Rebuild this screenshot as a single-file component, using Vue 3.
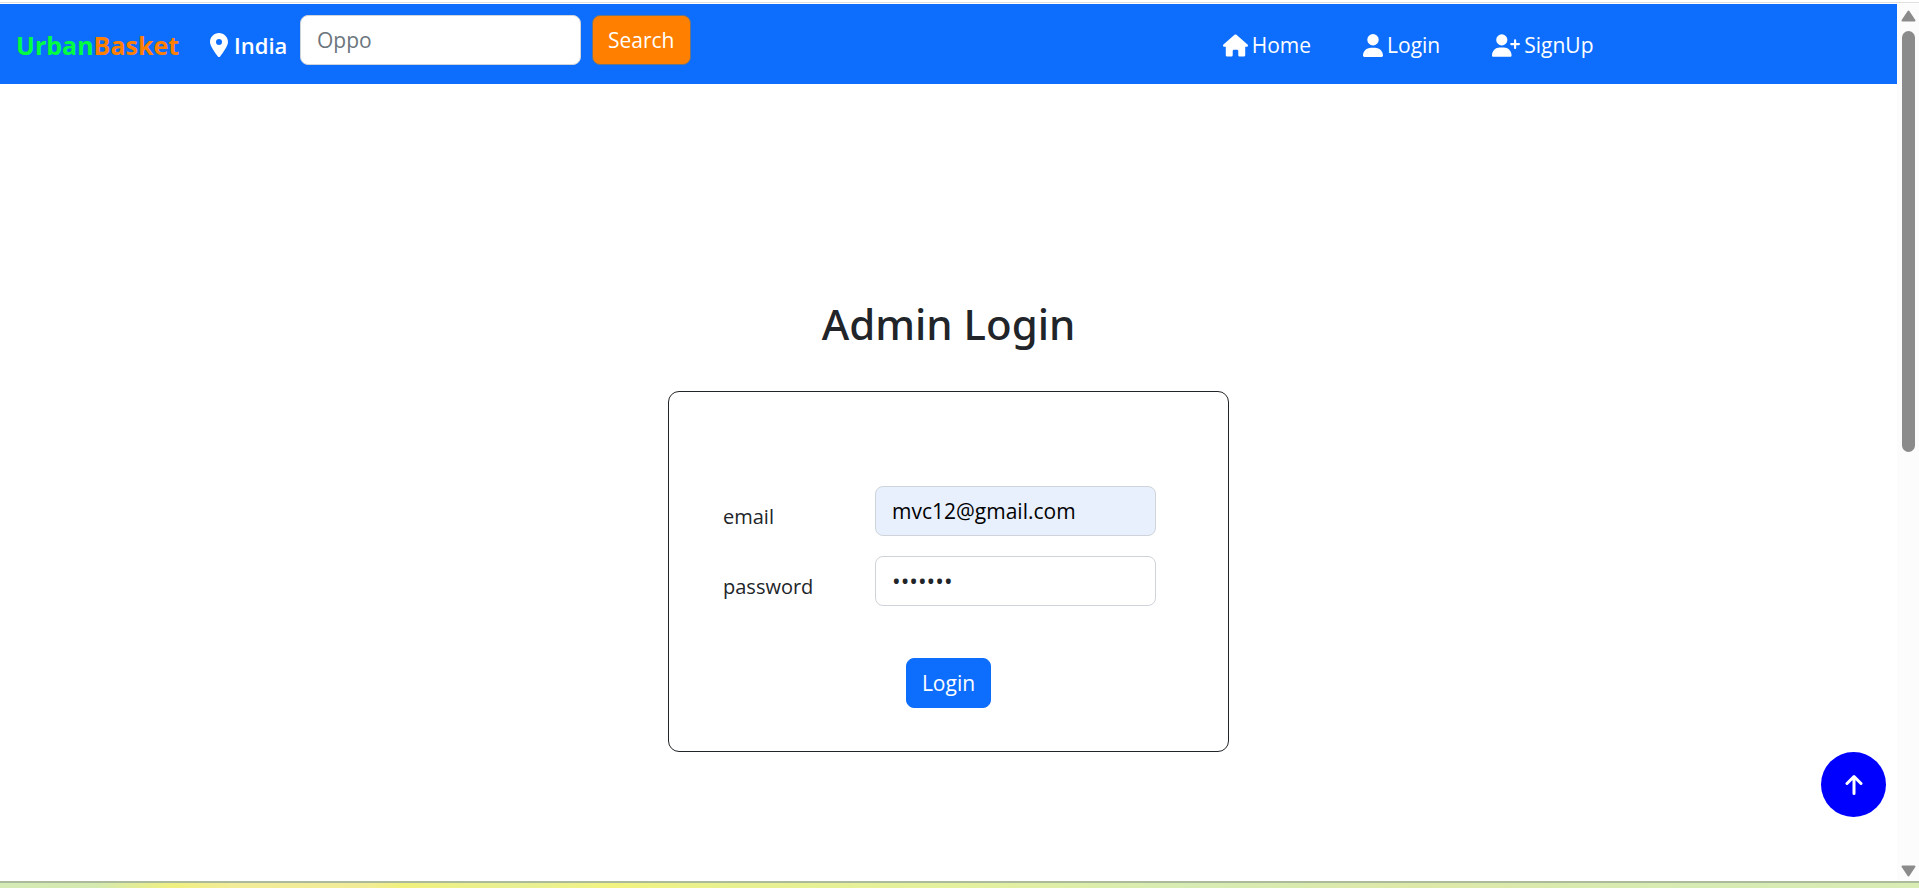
<script setup>
import { ref } from 'vue'

const search = ref('')
const email = ref('mvc12@gmail.com')
const password = ref('mvc1234')
</script>

<template>
  <div class="window">
    <div class="top-edge"></div>
    <div class="viewport">
      <div class="page">
        <header class="navbar">
          <a class="brand" href="#"><span class="brand-a">Urban</span><span class="brand-b">Basket</span></a>
          <div class="location">
            <svg class="pin" viewBox="0 0 384 512" aria-hidden="true"><path d="M215.700 499.200C267 435 384 279.400 384 192C384 86 298 0 192 0S0 86 0 192c0 87.400 117 243 168.300 307.200c12.300 15.300 35.100 15.300 47.400 0zM192 128a64 64 0 1 1 0 128 64 64 0 1 1 0-128z" /></svg>
            <span>India</span>
          </div>
          <form class="search" @submit.prevent>
            <input v-model="search" class="field" type="search" placeholder="Oppo" aria-label="Search products" />
            <button class="btn btn-search" type="submit">Search</button>
          </form>
          <nav class="links">
            <a href="#">
              <svg class="i-home" viewBox="0 0 576 512" aria-hidden="true"><path d="M575.800 255.500c0 18-15 32.100-32 32.100h-32l.7 160.200c0 2.700-.2 5.400-.5 8.100V472c0 22.100-17.900 40-40 40H392c-22.100 0-40-17.900-40-40v-88c0-17.700-14.300-32-32-32h-64c-17.700 0-32 14.300-32 32v88c0 22.100-17.900 40-40 40h-80c-22.100 0-40-17.900-40-40V287.600H32c-18 0-32-14-32-32.100 0-9 3-17 10-24L266.400 8c7-7 15-8 22-8s15 2 21 7l255.400 224.500c8 7 12 15 11 24z" /></svg>
              <span>Home</span>
            </a>
            <a href="#">
              <svg class="i-user" viewBox="0 0 448 512" aria-hidden="true"><path d="M224 256a128 128 0 1 0 0-256 128 128 0 1 0 0 256zm-45.700 48C79.800 304 0 383.800 0 482.300 0 498.700 13.300 512 29.700 512h388.600c16.400 0 29.700-13.300 29.700-29.700 0-98.500-79.800-178.300-178.300-178.300z" /></svg>
              <span>Login</span>
            </a>
            <a href="#">
              <svg class="i-plus" viewBox="0 0 640 512" aria-hidden="true"><path d="M96 128a128 128 0 1 1 256 0 128 128 0 1 1-256 0zM0 482.300C0 383.800 79.800 304 178.300 304h91.400c98.500 0 178.300 79.800 178.300 178.300 0 16.400-13.300 29.700-29.700 29.700H29.700C13.300 512 0 498.700 0 482.300zM504 312v-64h-64c-13.300 0-24-10.700-24-24s10.700-24 24-24h64v-64c0-13.300 10.700-24 24-24s24 10.700 24 24v64h64c13.300 0 24 10.700 24 24s-10.700 24-24 24h-64v64c0 13.300-10.700 24-24 24s-24-10.700-24-24z" /></svg>
              <span>SignUp</span>
            </a>
          </nav>
        </header>

        <main class="content">
          <h1>Admin Login</h1>
          <form class="card" @submit.prevent>
            <div class="row">
              <label for="email">email</label>
              <input id="email" v-model="email" class="field filled" type="email" />
            </div>
            <div class="row">
              <label for="password">password</label>
              <input id="password" v-model="password" class="field masked" type="password" />
            </div>
            <button class="btn btn-login" type="submit">Login</button>
          </form>
        </main>

        <button class="to-top" type="button" aria-label="Back to top">
          <svg viewBox="0 0 18 22" aria-hidden="true"><path d="M9 19.500V3M2 9.500L9 2.500l7 7" /></svg>
        </button>
      </div>

      <div class="scrollbar" aria-hidden="true">
        <svg class="arrow" viewBox="0 0 15 12"><path d="M7.500 1.500L13.500 10.500h-12z" /></svg>
        <div class="track"><div class="thumb"></div></div>
        <svg class="arrow" viewBox="0 0 15 12"><path d="M7.500 10.500L13.500 1.500h-12z" /></svg>
      </div>
    </div>
    <div class="bottom-edge"></div>
  </div>
</template>

<style>
body {
  margin: 0;
  background: #fff;
}
</style>

<style scoped>
* {
  box-sizing: border-box;
}

.window {
  display: flex;
  flex-direction: column;
  min-height: 100vh;
  font-family: "Open Sans", "Noto Sans", sans-serif;
  font-size: 21px;
  line-height: 32px;
  color: #212529;
}

.top-edge {
  height: 4px;
  background: linear-gradient(#fff 2px, #dfdfdf 2px, #dfdfdf 3px, #fff 3px);
}

.viewport {
  display: flex;
  flex: 1;
}

.page {
  position: relative;
  flex: 1;
}

.navbar {
  display: flex;
  align-items: center;
  height: 80px;
  padding: 2px 16% 0 16px;
  background: #0d6efd;
  color: #fff;
}

.brand {
  width: 194px;
  font-size: 25px;
  font-weight: 700;
  text-decoration: none;
}

.brand-a {
  color: #00ff40;
}

.brand-b {
  color: #ff8000;
}

.location {
  display: flex;
  align-items: center;
  gap: 6px;
  width: 90px;
  font-size: 22px;
  font-weight: 600;
}

svg {
  flex: none;
  fill: currentColor;
}

.pin {
  width: 18px;
  height: 24px;
}

.search {
  display: flex;
  gap: 11px;
  margin-bottom: 10px;
}

.field {
  width: 281px;
  height: 50px;
  padding: 0 16px;
  border: 1px solid #ced4da;
  border-radius: 8px;
  background: #fff;
  color: #212529;
  font: inherit;
  outline: none;
}

.field::placeholder {
  color: #6c757d;
  opacity: 1;
}

.filled {
  background: #e8f0fe;
  color: #000;
}

.masked {
  font-size: 23px;
}

.btn {
  height: 50px;
  padding: 0 15px;
  border: 1px solid #0d6efd;
  border-radius: 8px;
  background: #0d6efd;
  color: #fff;
  font: inherit;
}

.btn-search {
  border-color: #6c757d;
  background: #ff8000;
}

.links {
  display: flex;
  gap: 52px;
  margin-left: auto;
}

.links a {
  display: flex;
  align-items: center;
  gap: 4px;
  color: #fff;
  text-decoration: none;
}

.i-home {
  width: 25px;
  height: 23px;
}

.i-user {
  width: 20px;
  height: 23px;
}

.i-plus {
  width: 28px;
  height: 23px;
}

.content {
  display: flex;
  flex-direction: column;
  align-items: center;
  padding-top: 210px;
}

h1 {
  margin: 0 0 37px;
  font-family: "Noto Sans", "Open Sans", sans-serif;
  font-size: 42px;
  font-weight: 500;
  line-height: 60px;
}

.card {
  display: flex;
  flex-direction: column;
  width: 561px;
  padding: 94px 72px 43px 54px;
  border: 1px solid #212529;
  border-radius: 11px;
}

.row {
  display: flex;
  align-items: center;
  justify-content: space-between;
  margin-bottom: 20px;
}

.row label {
  padding-top: 12px;
  font-size: 20px;
}

.btn-login {
  align-self: center;
  margin: 32px 0 0 18px;
}

.to-top {
  position: absolute;
  right: 11px;
  bottom: 64px;
  display: flex;
  align-items: center;
  justify-content: center;
  width: 65px;
  height: 65px;
  padding: 0;
  border: 0;
  border-radius: 50%;
  background: #00f;
  color: #fff;
}

.to-top svg {
  width: 18px;
  height: 22px;
  fill: none;
  stroke: currentColor;
  stroke-width: 3;
  stroke-linecap: round;
  stroke-linejoin: round;
}

.scrollbar {
  display: flex;
  flex-direction: column;
  align-items: center;
  gap: 9px;
  width: 22px;
  padding: 6px 0 4px;
  background: #fcfcfc;
}

.arrow {
  width: 15px;
  height: 12px;
  fill: #8b8b8b;
  stroke: #8b8b8b;
  stroke-width: 2;
  stroke-linejoin: round;
}

.track {
  display: flex;
  flex: 1;
  flex-direction: column;
}

.thumb {
  flex: 0 0 51%;
  width: 13px;
  border-radius: 7px;
  background: #8b8b8b;
}

.bottom-edge {
  height: 7px;
  border-top: 2px solid #acba9c;
  background: linear-gradient(90deg, #d5ebb6 0%, #d5eab0 5%, #f0f080 9%, #f3ec98 12%, #f2ec98 19%, #f1f17e 21%, #e8f094 27%, #f2f381 32%, #e8f190 38%, #e4f19e 50%, #d7ecb4 62%, #dde9a8 74%, #d7ecb4 88%, #d8ecb4 100%);
}
</style>
